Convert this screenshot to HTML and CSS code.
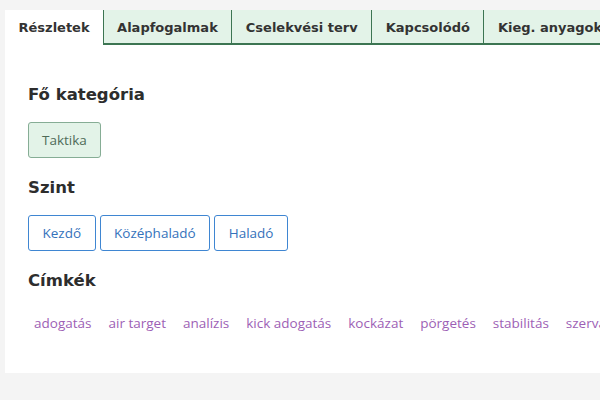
FILE: index.html
```html
<!DOCTYPE html>
<html lang="hu">
<head>
    <meta charset="UTF-8">
    <meta name="viewport" content="width=device-width, initial-scale=1.0">
    <title>Részletek</title>
    <link rel="stylesheet" href="styles.css">
</head>
<body>
    <div class="panel">
        <nav class="tabs">
            <div class="tab active">Részletek</div>
            <div class="tab">Alapfogalmak</div>
            <div class="tab">Cselekvési terv</div>
            <div class="tab">Kapcsolódó</div>
            <div class="tab">Kieg. anyagok</div>
        </nav>

        <div class="details">
            <h2>Fő kategória</h2>
            <div class="chips">
                <span class="chip category">Taktika</span>
            </div>

            <h2>Szint</h2>
            <div class="chips">
                <span class="chip level">Kezdő</span>
                <span class="chip level">Középhaladó</span>
                <span class="chip level">Haladó</span>
            </div>

            <h2>Címkék</h2>
            <div class="tags">
                <a class="tag">adogatás</a>
                <a class="tag">air target</a>
                <a class="tag">analízis</a>
                <a class="tag">kick adogatás</a>
                <a class="tag">kockázat</a>
                <a class="tag">pörgetés</a>
                <a class="tag">stabilitás</a>
                <a class="tag">szerva</a>
            </div>
        </div>
    </div>
</body>
</html>
```

FILE: styles.css
```css
body {
    margin: 0;
    font-family: "Open Sans", Arial, sans-serif;
    background-color: #f4f4f4;
    overflow: hidden;
    height: 400px;
}
.panel {
    background-color: #fff;
    margin: 10px 0 0 5px;
    height: 363px;
    overflow: hidden;
}
.tabs {
    display: flex;
    white-space: nowrap;
}
.tab {
    flex-shrink: 0;
    height: 35px;
    line-height: 35px;
    padding: 0 13.5px;
    font-family: "DejaVu Sans", sans-serif;
    font-weight: bold;
    font-size: 13px;
    color: #333;
    background-color: #e3f3e8;
    border-bottom: 2px solid #3c7552;
    border-left: 1px solid #3c7552;
    box-sizing: border-box;
}
.tab.active {
    background-color: #fff;
    border-bottom-color: #fff;
    border-left: none;
    padding: 0 13px 0 13.5px;
}
.details {
    padding: 1px 23px;
}
h2 {
    font-family: "DejaVu Sans", sans-serif;
    font-weight: 600;
    font-size: 16.5px;
    color: #2d2d2d;
    margin: 0;
}
.details h2:first-child {
    margin-top: 39px;
}
.chips {
    display: flex;
    gap: 4px;
    margin: 18px 0 20px;
}
.chip {
    height: 36px;
    line-height: 34px;
    padding: 0 13px;
    font-size: 13.5px;
    border-radius: 3px;
    box-sizing: border-box;
}
.chip.category {
    background-color: #e3f3e8;
    border: 1px solid #86ad95;
    color: #4f6b58;
}
.chip.level {
    background-color: #fff;
    border: 1px solid #3f86d2;
    color: #3572bb;
    padding: 0 13.5px;
}
.tags {
    display: flex;
    gap: 5px;
    margin-top: 20px;
    white-space: nowrap;
}
.tag {
    padding: 4px 6px;
    font-size: 13.5px;
    color: #9d5fb5;
    text-decoration: none;
}
```
